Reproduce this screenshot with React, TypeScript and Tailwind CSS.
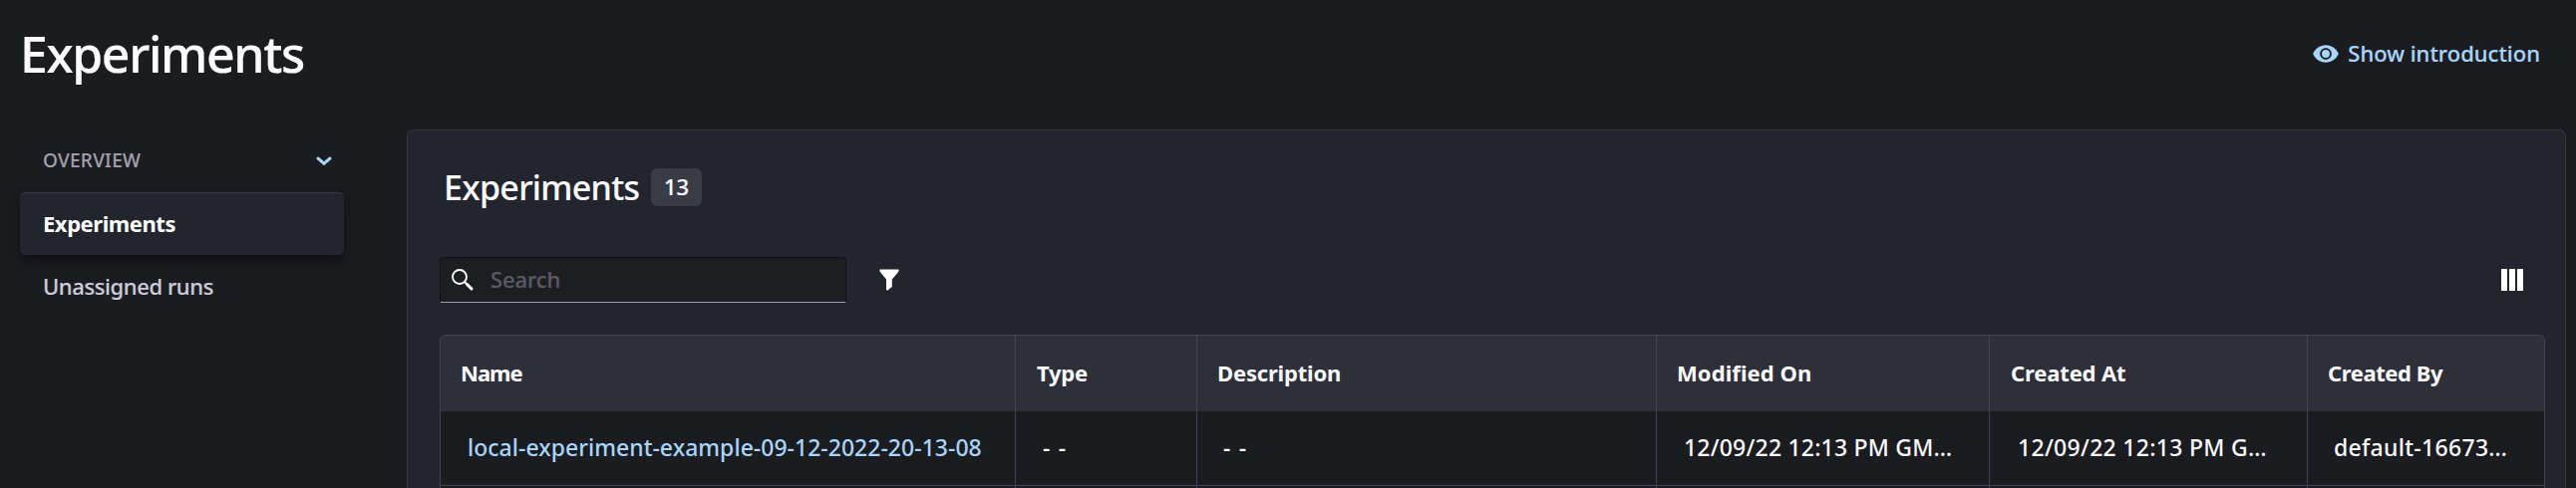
type Column = { header: string; head: string; value: string; cell: string };

const columns: Column[] = [
  { header: "Name", head: "pl-5 tracking-[-1px]", value: "local-experiment-example-09-12-2022-20-13-08", cell: "pl-[27px] text-[#a8d5fa] tracking-[0.02px]" },
  { header: "Type", head: "pl-[21px] tracking-[-0.24px]", value: "- -", cell: "pl-[27px] text-[#fbfaff] tracking-[1.2px]" },
  { header: "Description", head: "pl-5 tracking-[-0.18px]", value: "- -", cell: "pl-[26px] text-[#fbfaff] tracking-[1.2px]" },
  { header: "Modified On", head: "pl-5 tracking-[0.08px]", value: "12/09/22 12:13 PM GM…", cell: "pl-[27px] text-[#fbfaff] tracking-[0.2px]" },
  { header: "Created At", head: "pl-[21px] tracking-[-0.15px]", value: "12/09/22 12:13 PM G…", cell: "pl-[28px] text-[#fbfaff] tracking-[0.3px]" },
  { header: "Created By", head: "pl-5 tracking-[-0.42px]", value: "default-16673…", cell: "pl-[26px] text-[#fbfaff] tracking-[0.3px]" },
];

const gridColumns = "grid grid-cols-[577px_182px_461px_334px_319px_237px]";

function EyeIcon() {
  return (
    <svg className="h-7 w-7" viewBox="0 0 24 24" fill="#a8d5fa">
      <path d="M12 4.5C7 4.5 2.73 7.61 1 12c1.73 4.39 6 7.5 11 7.5s9.27-3.11 11-7.5c-1.73-4.39-6-7.5-11-7.5zM12 17c-2.76 0-5-2.24-5-5s2.24-5 5-5 5 2.24 5 5-2.24 5-5 5zm0-8.4a3.4 3.4 0 1 0 0 6.8 3.4 3.4 0 0 0 0-6.8z" />
    </svg>
  );
}

function SearchIcon() {
  return (
    <svg className="h-[22px] w-[22px]" viewBox="0 0 22 22" fill="none" stroke="#fff">
      <circle cx="8" cy="8" r="7" strokeWidth="1.9" />
      <path d="M13 13 15 15" strokeWidth="2" />
      <path d="M15.5 15.5 20 20" strokeWidth="3" strokeLinecap="round" />
    </svg>
  );
}

function Header() {
  return (
    <header className="flex h-[130px] items-start justify-between pl-5 pr-9">
      <h1 className="mt-6 text-[50px] leading-[60px] font-medium tracking-[-1.39px] text-[#fbfaff] [-webkit-text-stroke:0.2px]">Experiments</h1>
      <button className="mt-[39px] flex items-center gap-2 text-[#a8d5fa]">
        <span className="pt-px">
          <EyeIcon />
        </span>
        <span className="pb-px text-[22px] leading-[27px] font-medium [-webkit-text-stroke:0.2px]">Show introduction</span>
      </button>
    </header>
  );
}

function Sidebar() {
  return (
    <nav className="ml-5 w-[325px] shrink-0">
      <div className="flex h-[63px] items-center justify-between pr-3 pl-[23px]">
        <span className="pb-[2px] text-[19px] leading-6 font-medium tracking-[0.29px] text-[#a2a1b0] [-webkit-text-stroke:0.1px]">OVERVIEW</span>
        <svg className="h-[10px] w-4" viewBox="0 0 16 10" fill="none" stroke="#a8d5fa" strokeWidth="3" strokeLinecap="round" strokeLinejoin="miter">
          <path d="M2 2 8 7.2 14 2" />
        </svg>
      </div>
      <div className="flex h-[63px] items-center rounded-[5px] border-t border-[#36363c] bg-[#22252d] pb-[2px] pl-[23px] text-[22px] font-bold tracking-[-0.45px] text-[#fff] shadow-[0_5px_8px_0_rgba(0,0,0,0.35),0_10px_20px_rgba(0,0,0,0.1)]">
        Experiments
      </div>
      <div className="flex h-[63px] items-center pl-[23px] text-[22px] font-medium tracking-[-0.4px] text-[#cccbdb] [-webkit-text-stroke:0.15px]">
        Unassigned runs
      </div>
    </nav>
  );
}

function Toolbar() {
  return (
    <div className="mt-[51px] flex h-[46px] items-center">
      <div className="flex h-[46px] w-[408px] items-center rounded-t-[4px] border border-[#121317] border-b-[#9e9caf] bg-[#1d1e22] pl-[11px]">
        <SearchIcon />
        <span className="ml-[17px] pb-[2px] text-[22px] leading-[42px] font-medium tracking-[-0.1px] text-[#5a5a65] [-webkit-text-stroke:0.2px]">Search</span>
      </div>
      <svg className="ml-[33px] h-[22px] w-5" viewBox="0 0 20 22" fill="#fff">
        <path d="M1 0.5H19Q20 0.5 19.6 1.8L19 3.2 12.8 10.4V18L8.5 21.4Q7 22 7 20.5V10.4L1 3.2 0.4 1.8Q0 0.5 1 0.5Z" />
      </svg>
      <svg className="mr-[22px] ml-auto h-[22px] w-[22px]" viewBox="0 0 22 22" fill="#fff">
        <rect width="6" height="22" rx="0.5" />
        <rect x="8" width="6" height="22" rx="0.5" />
        <rect x="16" width="6" height="22" rx="0.5" />
      </svg>
    </div>
  );
}

function ExperimentsTable() {
  return (
    <div className="mt-8 w-[2112px] overflow-hidden rounded-t-[6px] border border-b-0 border-[#424352] bg-[#1b1c20]">
      <div className={`${gridColumns} h-[76px] bg-[#2e3039]`}>
        {columns.map((c) => (
          <div key={c.header} className={`flex items-center border-r border-[#424352] pb-px text-[22px] font-bold text-[#fbfaff] last:border-r-0 ${c.head}`}>
            {c.header}
          </div>
        ))}
      </div>
      <div className={`${gridColumns} h-[75px] border-b border-[#424352]`}>
        {columns.map((c) => (
          <div key={c.header} className={`flex items-center border-r border-[#424352] pb-px text-[23px] font-medium whitespace-nowrap last:border-r-0 ${c.cell}`}>
            {c.value}
          </div>
        ))}
      </div>
      <div className={`${gridColumns} h-10`}>
        {columns.map((c) => (
          <div key={c.header} className="border-r border-[#424352] last:border-r-0" />
        ))}
      </div>
    </div>
  );
}

export default function App() {
  return (
    <div className="h-[490px] w-[2584px] overflow-hidden bg-[#1b1c20] font-['Noto_Sans',sans-serif]">
      <Header />
      <div className="flex">
        <Sidebar />
        <main className="ml-[63px] h-[400px] w-[2166px] shrink-0 rounded-t-[7px] border border-b-0 border-[#36363c] bg-[#22252d] pt-[38px] pl-8">
          <div className="flex h-[38px] w-[2112px] items-center pl-[4px]">
            <h2 className="w-[208px] text-[34px] leading-[38px] font-medium tracking-[-0.71px] text-[#fbfaff] [-webkit-text-stroke:0.1px]">Experiments</h2>
            <span className="flex h-[38px] w-[51px] items-center justify-center rounded-[6px] bg-[#393b47] pb-px text-[22px] font-medium text-[#fbfaff] [-webkit-text-stroke:0.2px]">13</span>
          </div>
          <div className="w-[2112px]">
            <Toolbar />
          </div>
          <ExperimentsTable />
        </main>
      </div>
    </div>
  );
}
